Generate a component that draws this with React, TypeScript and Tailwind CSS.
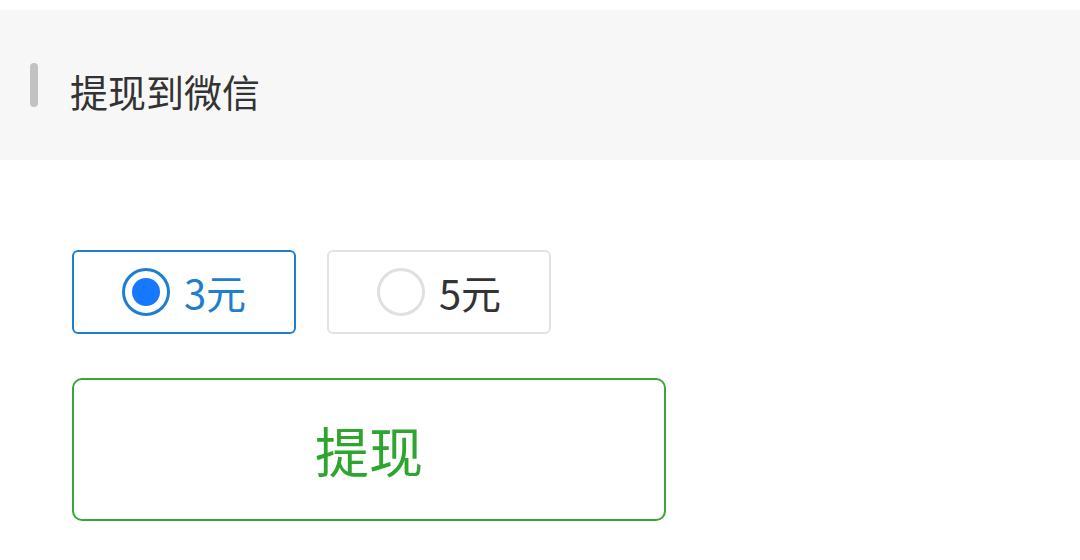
import { useState } from "react";

const amounts = [3, 5];

export default function App() {
  const [selected, setSelected] = useState(3);

  return (
    <div
      className="w-[1080px] h-[560px] bg-white pt-[10px]"
      style={{ fontFamily: '"Noto Sans CJK SC", "Noto Sans", sans-serif' }}
    >
      <div className="h-[150px] bg-[#f7f7f7] flex items-center pl-[30px]">
        <div className="w-[8px] h-[44px] rounded bg-[#c2c2c2]" />
        <span className="ml-[32px] mt-[12px] text-[38px] leading-none text-[#333]">提现到微信</span>
      </div>

      <div className="pl-[72px] pt-[90px]">
        <div className="flex gap-[31px]">
          {amounts.map((amt) => {
            const active = selected === amt;
            return (
              <button
                key={amt}
                onClick={() => setSelected(amt)}
                className={
                  active
                    ? "w-[224px] h-[84px] rounded-[6px] border-2 border-[#1f7ed0] flex items-center justify-center gap-[14px] bg-white"
                    : "w-[224px] h-[84px] rounded-[6px] border-2 border-[#e2e2e2] flex items-center justify-center gap-[14px] bg-white"
                }
              >
                {active ? (
                  <span className="w-[48px] h-[48px] rounded-full border-[3px] border-[#1f7ed0] flex items-center justify-center">
                    <span className="w-[28px] h-[28px] rounded-full bg-[#1677ff]" />
                  </span>
                ) : (
                  <span className="w-[48px] h-[48px] rounded-full border-[3px] border-[#e0e0e0]" />
                )}
                <span
                  className={
                    active
                      ? "text-[40px] leading-none text-[#1f7ed0]"
                      : "text-[40px] leading-none text-[#333]"
                  }
                >
                  {amt}元
                </span>
              </button>
            );
          })}
        </div>

        <button className="mt-[44px] w-[594px] h-[143px] rounded-[10px] border-2 border-[#3aa63a] bg-white flex items-center justify-center">
          <span className="text-[54px] text-[#2ea52e] leading-none">提现</span>
        </button>
      </div>
    </div>
  );
}
